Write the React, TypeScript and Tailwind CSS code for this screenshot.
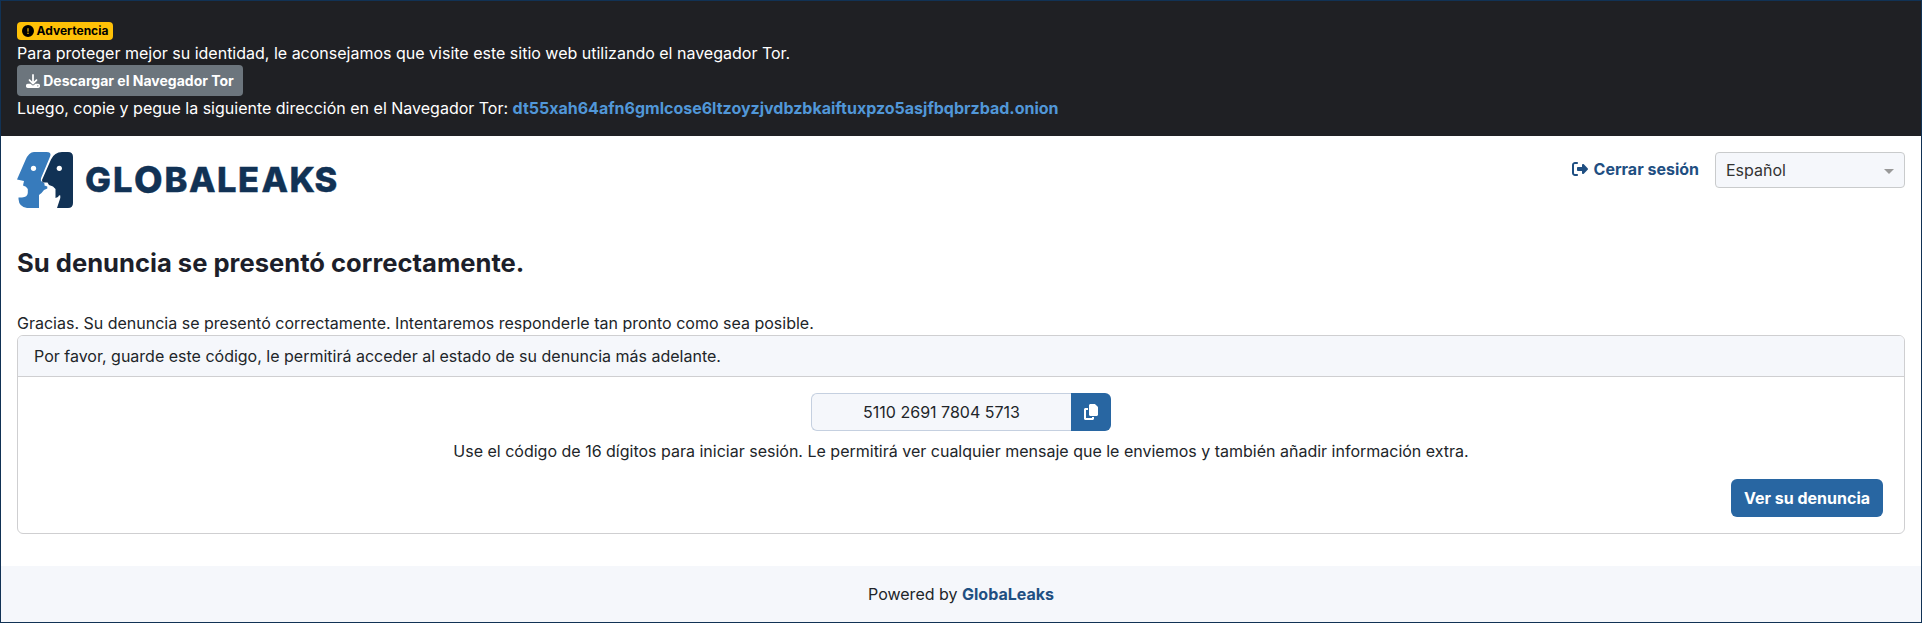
import React from "react";
import { FaCircleExclamation, FaCopy, FaDownload, FaRightFromBracket } from "react-icons/fa6";

function Logo() {
  return (
    <svg width="330" height="56" viewBox="0 0 330 56" role="img" aria-label="GlobaLeaks">
      <path fill="#377bbc" d="M17 0H29.500Q34.500 0 33.300 4L24.500 25Q23 28.500 25 29.800L27.500 31.500V33.500L30.300 34.500V36.500L27 38L24.500 41L22 43V56H10Q2 55 1.500 47V45.500H5Q10.500 45 10.800 41V37Q9.500 34 6 33.500L7 29L0 27.500L8.500 8Q12 0 17 0Z" />
      <circle cx="16.500" cy="16.300" r="2.600" fill="#fff" />
      <path fill="#113255" d="M45 0H51Q56 0 56 5V51Q56 56 51 56H40L43.300 46V43.500Q42 42.500 41 45L38.500 46V37L36 34.500L32 33L30.500 30.500H25.500L25 28L34 7.500Q37.500 0 45 0Z" />
      <circle cx="42.300" cy="16.300" r="2.600" fill="#fff" />
      <text
        y="40"
        fill="#113255"
        stroke="#113255"
        strokeWidth="0.400"
        fontSize="34.500"
        fontWeight="800"
        fontFamily="Inter, sans-serif"
      >
        <tspan x="68 96">GL</tspan>
        <tspan x="117" y="41" fontSize="37">O</tspan>
        <tspan x="147.500 172 200 221 244.500 272.500 297.500" y="40">BALEAKS</tspan>
      </text>
    </svg>
  );
}

function TorBanner() {
  return (
    <div className="flex flex-col items-start bg-[#1f2024] p-4 text-white">
      <div className="flex h-6 items-end pb-px">
        <span className="flex h-[18px] w-24 items-center justify-center gap-[3px] rounded bg-[#ffc107] text-xs font-bold text-black">
          <FaCircleExclamation />
          Advertencia
        </span>
      </div>
      <div>Para proteger mejor su identidad, le aconsejamos que visite este sitio web utilizando el navegador Tor.</div>
      <button className="flex h-[31px] w-[226px] items-center justify-center gap-[3px] rounded bg-[#6c757d] text-sm font-bold">
        <FaDownload />
        Descargar el Navegador Tor
      </button>
      <div>
        Luego, copie y pegue la siguiente dirección en el Navegador Tor:{" "}
        <a className="font-bold text-[#5197d8]">dt55xah64afn6gmlcose6ltzoyzjvdbzbkaiftuxpzo5asjfbqbrzbad.onion</a>
      </div>
    </div>
  );
}

export default function App() {
  return (
    <div className="flex h-[623px] w-full flex-col border border-[#113255] bg-white font-[Inter,sans-serif] text-base text-[#212529]">
      <TorBanner />
      <header className="flex h-[88px] items-start justify-between px-4 pt-4">
        <Logo />
        <div className="flex items-start gap-4">
          <a className="flex h-[34px] items-center gap-1.5 font-bold text-[#1f4f82]">
            <FaRightFromBracket />
            Cerrar sesión
          </a>
          <div className="flex h-9 w-[190px] items-center justify-between rounded border border-[#c9cbcc] bg-[#f5f7fb] px-2.5 text-[#333]">
            Español
            <span className="mt-0.5 border-x-5 border-t-5 border-x-transparent border-t-[#999]" />
          </div>
        </div>
      </header>
      <main className="px-4">
        <h1 className="mt-6 h-[63px] text-[25.6px] leading-[29px] font-bold text-[#1d1f2a]">
          Su denuncia se presentó correctamente.
        </h1>
        <p>Gracias. Su denuncia se presentó correctamente. Intentaremos responderle tan pronto como sea posible.</p>
        <section className="overflow-hidden rounded-md border border-[#cfcfd1]">
          <div className="border-b border-[#cfcfd1] bg-[#f5f7fb] px-4 py-2">
            Por favor, guarde este código, le permitirá acceder al estado de su denuncia más adelante.
          </div>
          <div className="flex flex-col items-center py-4">
            <div className="flex h-[38px] w-[300px]">
              <div className="flex flex-1 items-center justify-center rounded-l-md border border-r-0 border-[#c5d0e0] bg-[#f5f7fb]">
                5110 2691 7804 5713
              </div>
              <button className="flex w-10 items-center justify-center rounded-r-md bg-[#2866a2] text-white">
                <FaCopy />
              </button>
            </div>
            <p className="mt-2">
              Use el código de 16 dígitos para iniciar sesión. Le permitirá ver cualquier mensaje que le enviemos y
              también añadir información extra.
            </p>
            <button className="mt-4 mr-[21px] h-[38px] w-[152px] self-end rounded-md bg-[#2866a2] font-bold text-white">
              Ver su denuncia
            </button>
          </div>
        </section>
      </main>
      <footer className="mt-auto bg-[#f5f7fb] py-4 text-center">
        Powered by <a className="font-bold text-[#1f4f82]">GlobaLeaks</a>
      </footer>
    </div>
  );
}
